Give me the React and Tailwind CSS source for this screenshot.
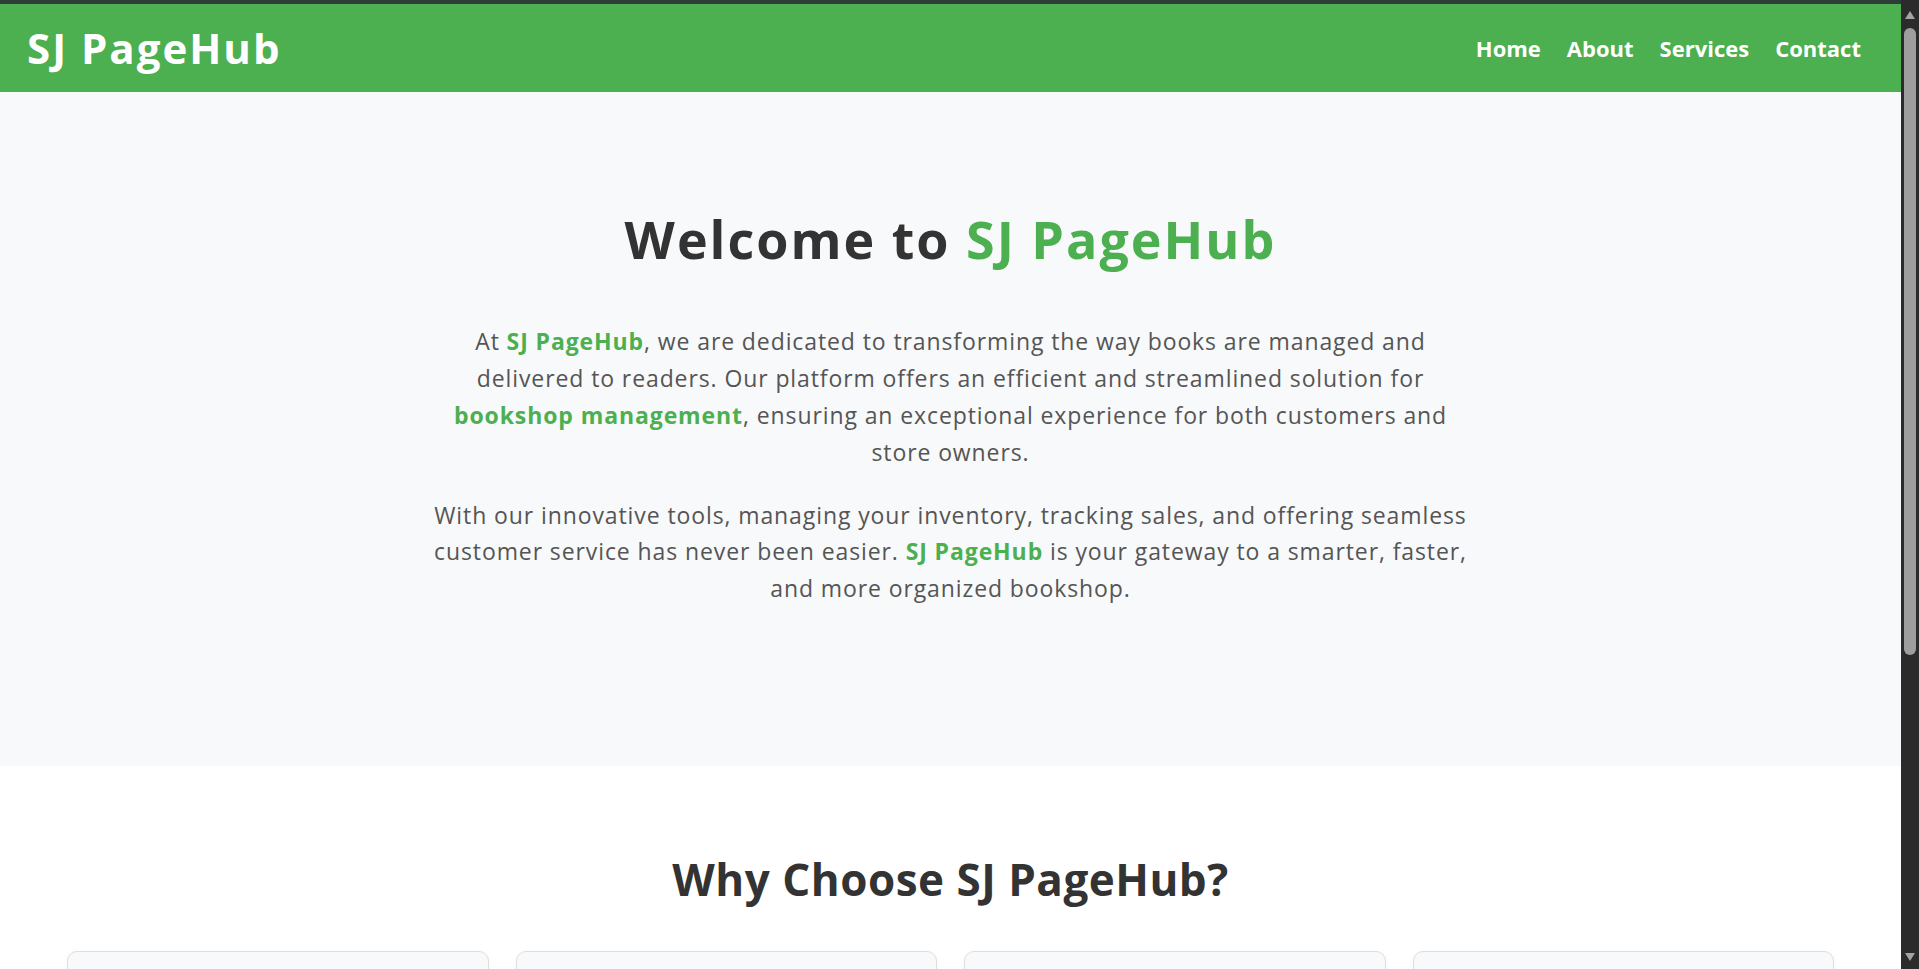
import React from "react";

const features = [
  { title: "Smart Inventory", text: "Keep track of every title on your shelves in real time." },
  { title: "Sales Tracking", text: "Understand what sells and when with clear reports." },
  { title: "Customer Service", text: "Offer a seamless experience to every reader." },
  { title: "Fast Delivery", text: "Get books into readers' hands faster than ever." },
];

function Scrollbar() {
  return (
    <div className="w-[18px] h-full bg-[#2b2b2b] flex flex-col items-center shrink-0">
      <div className="h-[28px] w-full flex items-start justify-center pt-[10px]">
        <svg width="12" height="10" viewBox="0 0 12 10">
          <polygon points="6,1 11,9 1,9" fill="#a3a3a3" />
        </svg>
      </div>
      <div className="w-[12px] h-[627px] rounded-[6px] bg-[#9e9e9e]" />
      <div className="flex-1" />
      <div className="h-[20px] w-full flex items-start justify-center pt-[3px]">
        <svg width="12" height="10" viewBox="0 0 12 10">
          <polygon points="1,1 11,1 6,9" fill="#a3a3a3" />
        </svg>
      </div>
    </div>
  );
}

export default function App() {
  const G = "text-[#4caf50] font-bold";
  return (
    <div
      className="w-full h-screen overflow-hidden flex bg-[#2f3d3a]"
      style={{ fontFamily: '"Open Sans", "Noto Sans", sans-serif' }}
    >
      <div className="flex-1 h-full flex flex-col overflow-hidden">
        <div className="h-[4px] bg-[#2f3d3a] shrink-0" />
        <header className="h-[88px] shrink-0 bg-[#4caf50] flex items-center justify-between pl-[27px] pr-[40px]">
          <div className="text-white text-[42px] font-bold leading-none tracking-[2px]">SJ PageHub</div>
          <nav className="flex items-center gap-[26px] text-white text-[22px] font-bold">
            <a>Home</a>
            <a>About</a>
            <a>Services</a>
            <a>Contact</a>
          </nav>
        </header>
        <section className="bg-[#f8f9fa] pt-[116px] pb-[132px] flex flex-col items-center text-center shrink-0">
          <h1 className="text-[52px] leading-[1.2] font-bold text-[#333333] mb-[53px] tracking-[2px]">
            Welcome to <span className="text-[#4caf50]">SJ PageHub</span>
          </h1>
          <p className="text-[23px] leading-[36.8px] text-[#555555] mb-[26px] whitespace-nowrap tracking-[0.9px]">
            At <span className={G}>SJ PageHub</span>, we are dedicated to transforming the way books are managed and
            <br />
            delivered to readers. Our platform offers an efficient and streamlined solution for
            <br />
            <span className={G}>bookshop management</span>, ensuring an exceptional experience for both customers and
            <br />
            store owners.
          </p>
          <p className="text-[23px] leading-[36.8px] text-[#555555] mb-[27px] whitespace-nowrap tracking-[0.9px]">
            With our innovative tools, managing your inventory, tracking sales, and offering seamless
            <br />
            customer service has never been easier. <span className={G}>SJ PageHub</span> is your gateway to a smarter, faster,
            <br />
            and more organized bookshop.
          </p>
        </section>
        <section className="bg-white pt-[87px] flex-1 px-[67px]">
          <h2 className="text-[44px] leading-[1.2] font-bold text-[#333333] text-center mb-[45px] tracking-[0.5px]">
            Why Choose SJ PageHub?
          </h2>
          <div className="grid grid-cols-4 gap-[27px]">
            {features.map((f) => (
              <div
                key={f.title}
                className="bg-[#f8f9fa] border border-[#dedede] rounded-[10px] p-[30px] h-[240px] shadow-[0_2px_6px_rgba(0,0,0,0.04)]"
              >
                <h3 className="text-[24px] font-bold text-[#4caf50] mb-[12px]">{f.title}</h3>
                <p className="text-[18px] text-[#555555]">{f.text}</p>
              </div>
            ))}
          </div>
        </section>
      </div>
      <Scrollbar />
    </div>
  );
}
